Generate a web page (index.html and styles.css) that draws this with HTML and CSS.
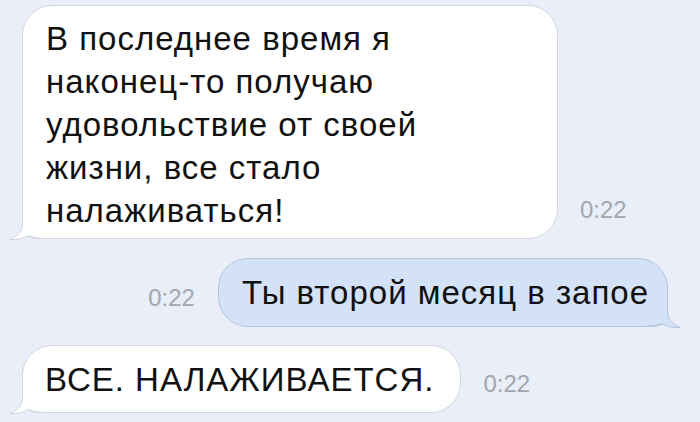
FILE: index.html
```html
<!DOCTYPE html>
<html lang="ru">
<head>
    <meta charset="UTF-8">
    <meta name="viewport" content="width=device-width, initial-scale=1.0">
    <title>Сообщения</title>
    <link rel="stylesheet" href="styles.css">
</head>
<body>
    <div class="chat">
        <div class="row">
            <div class="bubble bubble-in bubble-long">
                <span class="text">В последнее время я<br>наконец-то получаю<br>удовольствие от своей<br>жизни, все стало<br>налаживаться!</span>
                <svg class="tail" width="40" height="31" viewBox="0 0 40 31">
                    <path class="tail-fill" d="M13.5,0 L13.5,14 C13.5,22 9,27 1,30.5 C8,31 14,29.5 20,26.5 C25,28.8 31,29.5 40,29.5 L40,0 Z"/>
                    <path class="tail-line" d="M13.5,0 L13.5,14 C13.5,22 9,27 1,30.5 C8,31 14,29.5 20,26.5 C25,28.8 31,29.5 40,29.5"/>
                </svg>
            </div>
            <span class="time">0:22</span>
        </div>

        <div class="row row-out">
            <span class="time">0:22</span>
            <div class="bubble bubble-out">
                <span class="text">Ты второй месяц в запое</span>
                <svg class="tail" width="40" height="31" viewBox="0 0 40 31">
                    <path class="tail-fill" d="M13.5,0 L13.5,14 C13.5,22 9,27 1,30.5 C8,31 14,29.5 20,26.5 C25,28.8 31,29.5 40,29.5 L40,0 Z"/>
                    <path class="tail-line" d="M13.5,0 L13.5,14 C13.5,22 9,27 1,30.5 C8,31 14,29.5 20,26.5 C25,28.8 31,29.5 40,29.5"/>
                </svg>
            </div>
        </div>

        <div class="row row-last">
            <div class="bubble bubble-in bubble-short">
                <span class="text">ВСЕ. НАЛАЖИВАЕТСЯ.</span>
                <svg class="tail" width="40" height="31" viewBox="0 0 40 31">
                    <path class="tail-fill" d="M13.5,0 L13.5,14 C13.5,22 9,27 1,30.5 C8,31 14,29.5 20,26.5 C25,28.8 31,29.5 40,29.5 L40,0 Z"/>
                    <path class="tail-line" d="M13.5,0 L13.5,14 C13.5,22 9,27 1,30.5 C8,31 14,29.5 20,26.5 C25,28.8 31,29.5 40,29.5"/>
                </svg>
            </div>
            <span class="time">0:22</span>
        </div>
    </div>
</body>
</html>
```

FILE: styles.css
```css
body {
    margin: 0;
    background-color: #e9eef8;
    font-family: "Liberation Sans", Arial, sans-serif;
}
.chat {
    display: flex;
    flex-direction: column;
    width: 700px;
    height: 422px;
    padding: 5px 0 0 22px;
    box-sizing: border-box;
    overflow: hidden;
}
.row {
    display: flex;
    align-items: flex-end;
}
.row-out {
    justify-content: flex-end;
    padding-right: 32px;
    margin-top: 19px;
}
.row-last {
    margin-top: 18px;
}

/* message bubbles */
.bubble {
    position: relative;
    font-size: 33px;
    line-height: 43px;
    letter-spacing: 1px;
    color: #111;
    border-radius: 30px;
    padding: 12px 18px 12px 23px;
    white-space: nowrap;
}
.bubble .text {
    position: relative;
    z-index: 1;
}
.bubble-in {
    background: #fff;
    border: 1px solid #d2d6dd;
    border-bottom-left-radius: 14px;
}
.bubble-out {
    background: #d4e2f7;
    border: 1px solid #b3c4df;
    border-bottom-right-radius: 14px;
}
.bubble-long {
    width: 536px;
    box-sizing: border-box;
    padding: 11px 23px 6px;
}
.bubble-short {
    padding: 12px 26px 11px 22px;
}

/* the little tail in the bottom corner */
.tail {
    position: absolute;
    bottom: -2px;
    left: -14px;
    display: block;
}
.bubble-out .tail {
    left: auto;
    right: -14px;
    transform: scaleX(-1);
}
.tail-line {
    fill: none;
    stroke-width: 1;
}
.bubble-in .tail-fill { fill: #fff; }
.bubble-in .tail-line { stroke: #d2d6dd; }
.bubble-out .tail-fill { fill: #d4e2f7; }
.bubble-out .tail-line { stroke: #b3c4df; }

.time {
    font-size: 24px;
    line-height: 24px;
    color: #a2a6ad;
    margin: 0 23px 17px 22px;
}
```
